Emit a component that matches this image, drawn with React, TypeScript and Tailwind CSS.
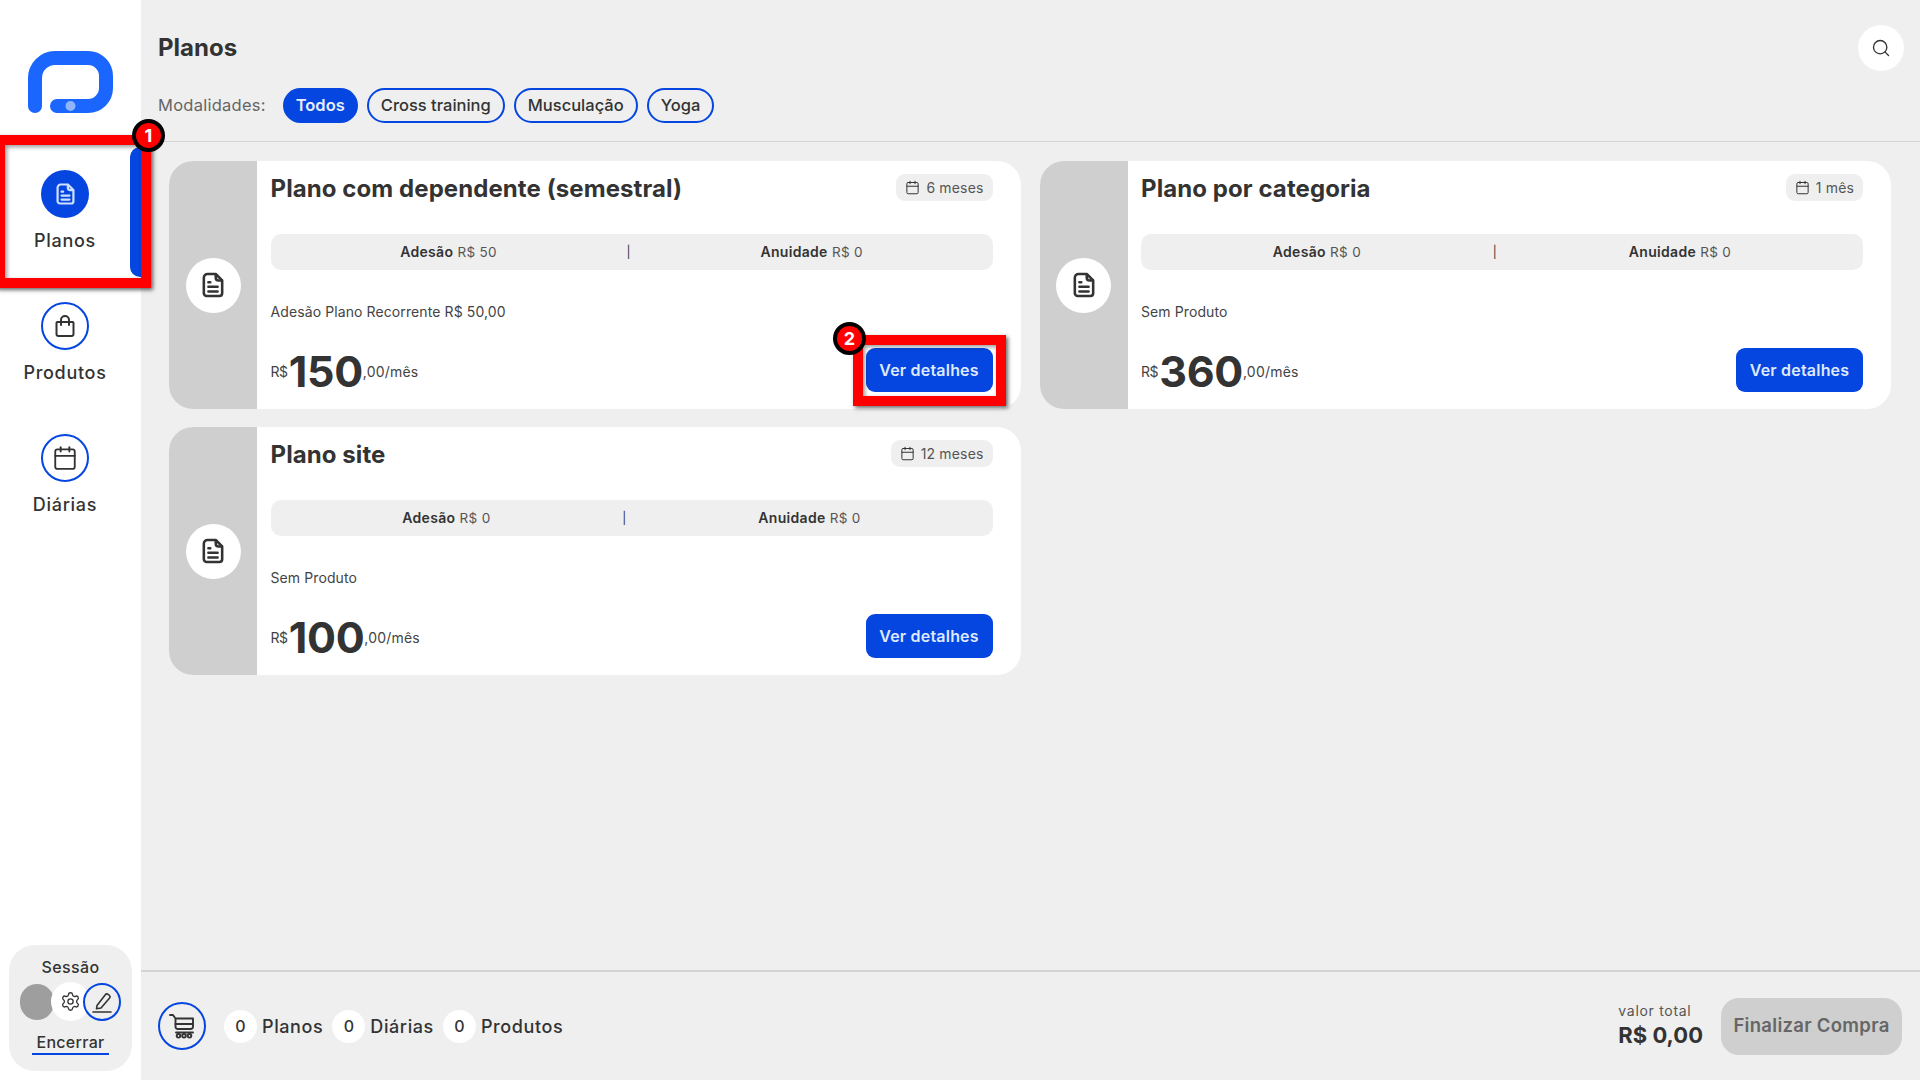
import React from "react";
import { Calendar, Search, Settings } from "lucide-react";

const Doc = ({ className = "" }: { className?: string }) => (
  <svg viewBox="0 0 24 28" className={className} fill="none" stroke="currentColor" strokeWidth="2.8" strokeLinecap="round" strokeLinejoin="round">
    <path d="M6 2h9l7 7v14a3 3 0 0 1-3 3H5a3 3 0 0 1-3-3V6a4 4 0 0 1 4-4z" />
    <path d="M15 2.500V6a3 3 0 0 0 3 3h3.500" />
    <path d="M7 11h2M7 16h10M7 21h10" />
  </svg>
);

const Bag = () => (
  <svg viewBox="0 0 24 24" className="w-[24px] h-[24px]" fill="none" stroke="currentColor" strokeWidth="2" strokeLinecap="round" strokeLinejoin="round">
    <path d="M4 8h16a1 1 0 0 1 .5.8V20a2 2 0 0 1-2 2H5.500a2 2 0 0 1-2-2V8.800A1 1 0 0 1 4 8z" />
    <path d="M8 11V6a4 4 0 0 1 8 0v5" />
  </svg>
);

const Cart = () => (
  <svg viewBox="0 0 26 26" className="w-[26px] h-[26px]" fill="none" stroke="currentColor" strokeWidth="1.9" strokeLinecap="round" strokeLinejoin="round">
    <path d="M1 2h3l2.500 3.500H24v8a2.500 2.500 0 0 1-2.500 2.500H9a2.500 2.500 0 0 1-2.500-2.500V5.500" />
    <path d="M6.500 11h17.500" />
    <path d="M7 19.500h17" />
    <circle cx="9.500" cy="22.800" r="1.800" />
    <circle cx="20.500" cy="22.800" r="1.800" />
    <circle cx="15" cy="22.800" r="1.800" />
  </svg>
);

const Edit = () => (
  <svg viewBox="0 0 24 24" className="w-[24px] h-[24px]" fill="none" stroke="currentColor" strokeWidth="1.6" strokeLinecap="round" strokeLinejoin="round">
    <path d="M7 15.500 15.500 4.500a1.800 1.800 0 0 1 2.600-.2l1.400 1.200a1.800 1.800 0 0 1 .1 2.500L11 18l-4.500.8z" />
    <path d="M3 22h18" />
  </svg>
);

const Logo = () => (
  <svg width="85" height="62" viewBox="28 51 85 62" fill="none">
    <path d="M35 106V78a20 20 0 0 1 20-20h33a18 18 0 0 1 18 18v12a18 18 0 0 1-18 18H57" stroke="#1a66ff" strokeWidth="14" strokeLinecap="round" />
    <circle cx="70.500" cy="106" r="5" fill="#8fb5fa" />
  </svg>
);

const NavItem = ({ icon, label, active }: { icon: React.ReactNode; label: string; active?: boolean }) => (
  <div className="relative h-[132px] flex flex-col items-center pr-[11px]">
    <div className="pt-[34px] flex flex-col items-center">
      <div className={active ? "w-[48px] h-[48px] rounded-full bg-[#0546e0] text-[#cfe0ff] flex items-center justify-center" : "w-[48px] h-[48px] rounded-full border-2 border-[#0546e0] text-[#333333] flex items-center justify-center"}>
        {icon}
      </div>
      <span className="mt-[10px] text-[18px] leading-[26px] font-medium tracking-[0.7px] text-[#333333]">{label}</span>
    </div>
    {active && <div className="absolute right-0 top-[11px] h-[130px] w-[11px] bg-[#0546e0] rounded-l-[10px]" />}
  </div>
);

const Pill = ({ label, active }: { label: string; active?: boolean }) => (
  <div className={active ? "h-[35px] px-[13px] rounded-full bg-[#0546e0] text-[#e6eeff] flex items-center text-[16.5px] font-semibold" : "h-[35px] px-[12px] rounded-full border-2 border-[#0546e0] text-[#333333] flex items-center text-[16.5px] font-medium"}>
    {label}
  </div>
);

const PlanCard = ({ title, months, ades, desc, price }: { title: string; months: string; ades: string; desc: string; price: string }) => (
  <div className="h-[248px] flex rounded-[24px] overflow-hidden bg-white">
    <div className="w-[88px] shrink-0 bg-[#cfcfcf] flex items-center justify-center">
      <div className="w-[55px] h-[55px] rounded-full bg-white flex items-center justify-center text-[#333333]">
        <Doc className="w-[22px] h-[26px]" />
      </div>
    </div>
    <div className="flex-1 min-w-0 pl-[13.5px] pr-[28px] flex flex-col">
      <div className="h-[73px] flex items-start justify-between pt-[10px]">
        <h2 className="text-[24px] leading-[36px] font-bold tracking-[0.08px] text-[#333333] whitespace-nowrap">{title}</h2>
        <div className="mt-[3px] h-[27px] px-[9px] rounded-[9px] bg-[#efefef] flex items-center gap-[6px] text-[14px] tracking-[0.15px] text-[#555555]">
          <Calendar className="w-[15px] h-[15px] text-[#333333]" strokeWidth={1.6} />
          {months}
        </div>
      </div>
      <div className="h-[36px] rounded-[10px] bg-[#efefef] flex items-center justify-evenly text-[14px] tracking-[0.3px]">
        <span className="text-[#333333]"><b className="font-semibold">Adesão</b> <span className="text-[#555555] text-[13.5px]">R$ {ades}</span></span>
        <span className="text-[#333333] text-[12px]">|</span>
        <span className="text-[#333333]"><b className="font-semibold">Anuidade</b> <span className="text-[#555555] text-[13.5px]">R$ 0</span></span>
      </div>
      <p className="mt-[32px] text-[14px] leading-[20px] tracking-[0.1px] text-[#444444]">{desc}</p>
      <div className="mt-[27px] h-[44px] flex items-center justify-between">
        <div className="flex items-center text-[14px] text-[#444444]">
          <span className="tracking-[-0.4px]">R$</span>
          <span className="text-[43px] leading-[44px] font-bold tracking-[-0.3px] text-[#333333] ml-[1px]">{price}</span>
          <span className="tracking-[0.2px]">,00/mês</span>
        </div>
        <button className="w-[127px] h-[44px] rounded-[9px] bg-[#0546e0] text-[#dfe9ff] text-[16px] font-semibold tracking-[0.2px] -translate-y-[1px]">Ver detalhes</button>
      </div>
    </div>
  </div>
);

const Count = ({ label }: { label: string }) => (
  <div className="flex items-center gap-[5px]">
    <div className="w-[33px] h-[33px] rounded-full bg-white flex items-center justify-center text-[16px] font-medium text-[#333333]">0</div>
    <span className="text-[18px] font-medium tracking-[0.6px] text-[#333333]">{label}</span>
  </div>
);

const Badge = ({ n, className }: { n: string; className: string }) => (
  <div className={"absolute w-[33px] h-[33px] rounded-full bg-[#ff0000] border-[4px] border-black text-white flex items-center justify-center text-[18px] font-bold " + className}>{n}</div>
);

export default function App() {
  return (
    <div className="relative h-screen w-full overflow-hidden flex bg-[#efefef] font-['Inter','Liberation_Sans',sans-serif] text-[#333333]">
      <aside className="w-[141px] shrink-0 bg-white flex flex-col">
        <div className="h-[136px] pt-[51px] pl-[28px]"><Logo /></div>
        <NavItem active label="Planos" icon={<Doc className="w-[19px] h-[24px]" />} />
        <NavItem label="Produtos" icon={<Bag />} />
        <NavItem label="Diárias" icon={<Calendar className="w-[26px] h-[26px]" strokeWidth={1.7} />} />
        <div className="mt-auto mb-[9px] ml-[9px] w-[123px] h-[126px] rounded-[26px] bg-[#efefef] flex flex-col items-center pt-[11px]">
          <span className="text-[16px] leading-[22px] font-medium tracking-[0.4px] text-[#333333]">Sessão</span>
          <div className="mt-[4px] flex items-center">
            <div className="w-[34px] h-[36px] rounded-full bg-[#9e9e9e]" />
            <div className="-ml-[3px] w-[39px] h-[39px] rounded-full bg-white flex items-center justify-center">
              <Settings className="w-[21px] h-[21px]" strokeWidth={1.5} />
            </div>
            <div className="-ml-[7px] w-[38px] h-[38px] rounded-full border-2 border-[#0546e0] bg-[#efefef] flex items-center justify-center">
              <Edit />
            </div>
          </div>
          <span className="mt-[10px] w-[77px] text-center border-b-2 border-[#0546e0] text-[16px] leading-[22px] font-medium tracking-[0.3px] text-[#333333]">Encerrar</span>
        </div>
      </aside>

      <main className="flex-1 min-w-0 flex flex-col">
        <header className="h-[142px] shrink-0 border-b border-[#d4d4d4] pl-[17px] pr-[16px] flex flex-col">
          <div className="h-[88px] pt-[25px] flex items-start justify-between">
            <h1 className="text-[24px] leading-[46px] font-bold text-[#333333]">Planos</h1>
            <div className="w-[46px] h-[46px] rounded-full bg-white flex items-center justify-center">
              <Search className="w-[20px] h-[20px] text-[#333333]" strokeWidth={1.6} />
            </div>
          </div>
          <div className="flex items-center gap-[9px]">
            <span className="mr-[8px] text-[16.5px] tracking-[0.25px] text-[#666666]">Modalidades:</span>
            <Pill active label="Todos" />
            <Pill label="Cross training" />
            <Pill label="Musculação" />
            <Pill label="Yoga" />
          </div>
        </header>

        <section className="flex-1 min-h-0 pt-[19px] pl-[28px] pr-[29px]">
          <div className="grid grid-cols-2 gap-x-[19px] gap-y-[18px]">
            <PlanCard title="Plano com dependente (semestral)" months="6 meses" ades="50" desc="Adesão Plano Recorrente R$ 50,00" price="150" />
            <PlanCard title="Plano por categoria" months="1 mês" ades="0" desc="Sem Produto" price="360" />
            <PlanCard title="Plano site" months="12 meses" ades="0" desc="Sem Produto" price="100" />
          </div>
        </section>

        <footer className="h-[110px] shrink-0 border-t-2 border-[#d4d4d4] pl-[17px] pr-[18px] flex items-center justify-between">
          <div className="flex items-center gap-[9px]">
            <div className="mr-[9px] w-[48px] h-[48px] rounded-full border-2 border-[#0546e0] flex items-center justify-center text-[#333333]"><Cart /></div>
            <Count label="Planos" />
            <Count label="Diárias" />
            <Count label="Produtos" />
          </div>
          <div className="flex items-center gap-[18px]">
            <div className="flex flex-col">
              <span className="text-[14px] leading-[18px] tracking-[0.7px] text-[#555555]">valor total</span>
              <span className="text-[22px] leading-[30px] font-bold text-[#333333]">R$ 0,00</span>
            </div>
            <button className="w-[181px] h-[57px] rounded-[18px] bg-[#cfcfcf] text-[#666666] text-[18.5px] font-semibold tracking-[0.3px]">Finalizar Compra</button>
          </div>
        </footer>
      </main>

      <div className="absolute left-[-5px] top-[135px] w-[156px] h-[153px] border-[10px] border-[#ff0000] shadow-[2px_2px_4px_rgba(0,0,0,0.6),inset_2px_2px_4px_rgba(0,0,0,0.4)]" />
      <div className="absolute left-[853px] top-[335px] w-[153px] h-[71px] border-[10px] border-[#ff0000] shadow-[2px_2px_4px_rgba(0,0,0,0.6),inset_2px_2px_4px_rgba(0,0,0,0.4)]" />
      <Badge n="1" className="left-[132px] top-[119px]" />
      <Badge n="2" className="left-[833px] top-[322px]" />
    </div>
  );
}
